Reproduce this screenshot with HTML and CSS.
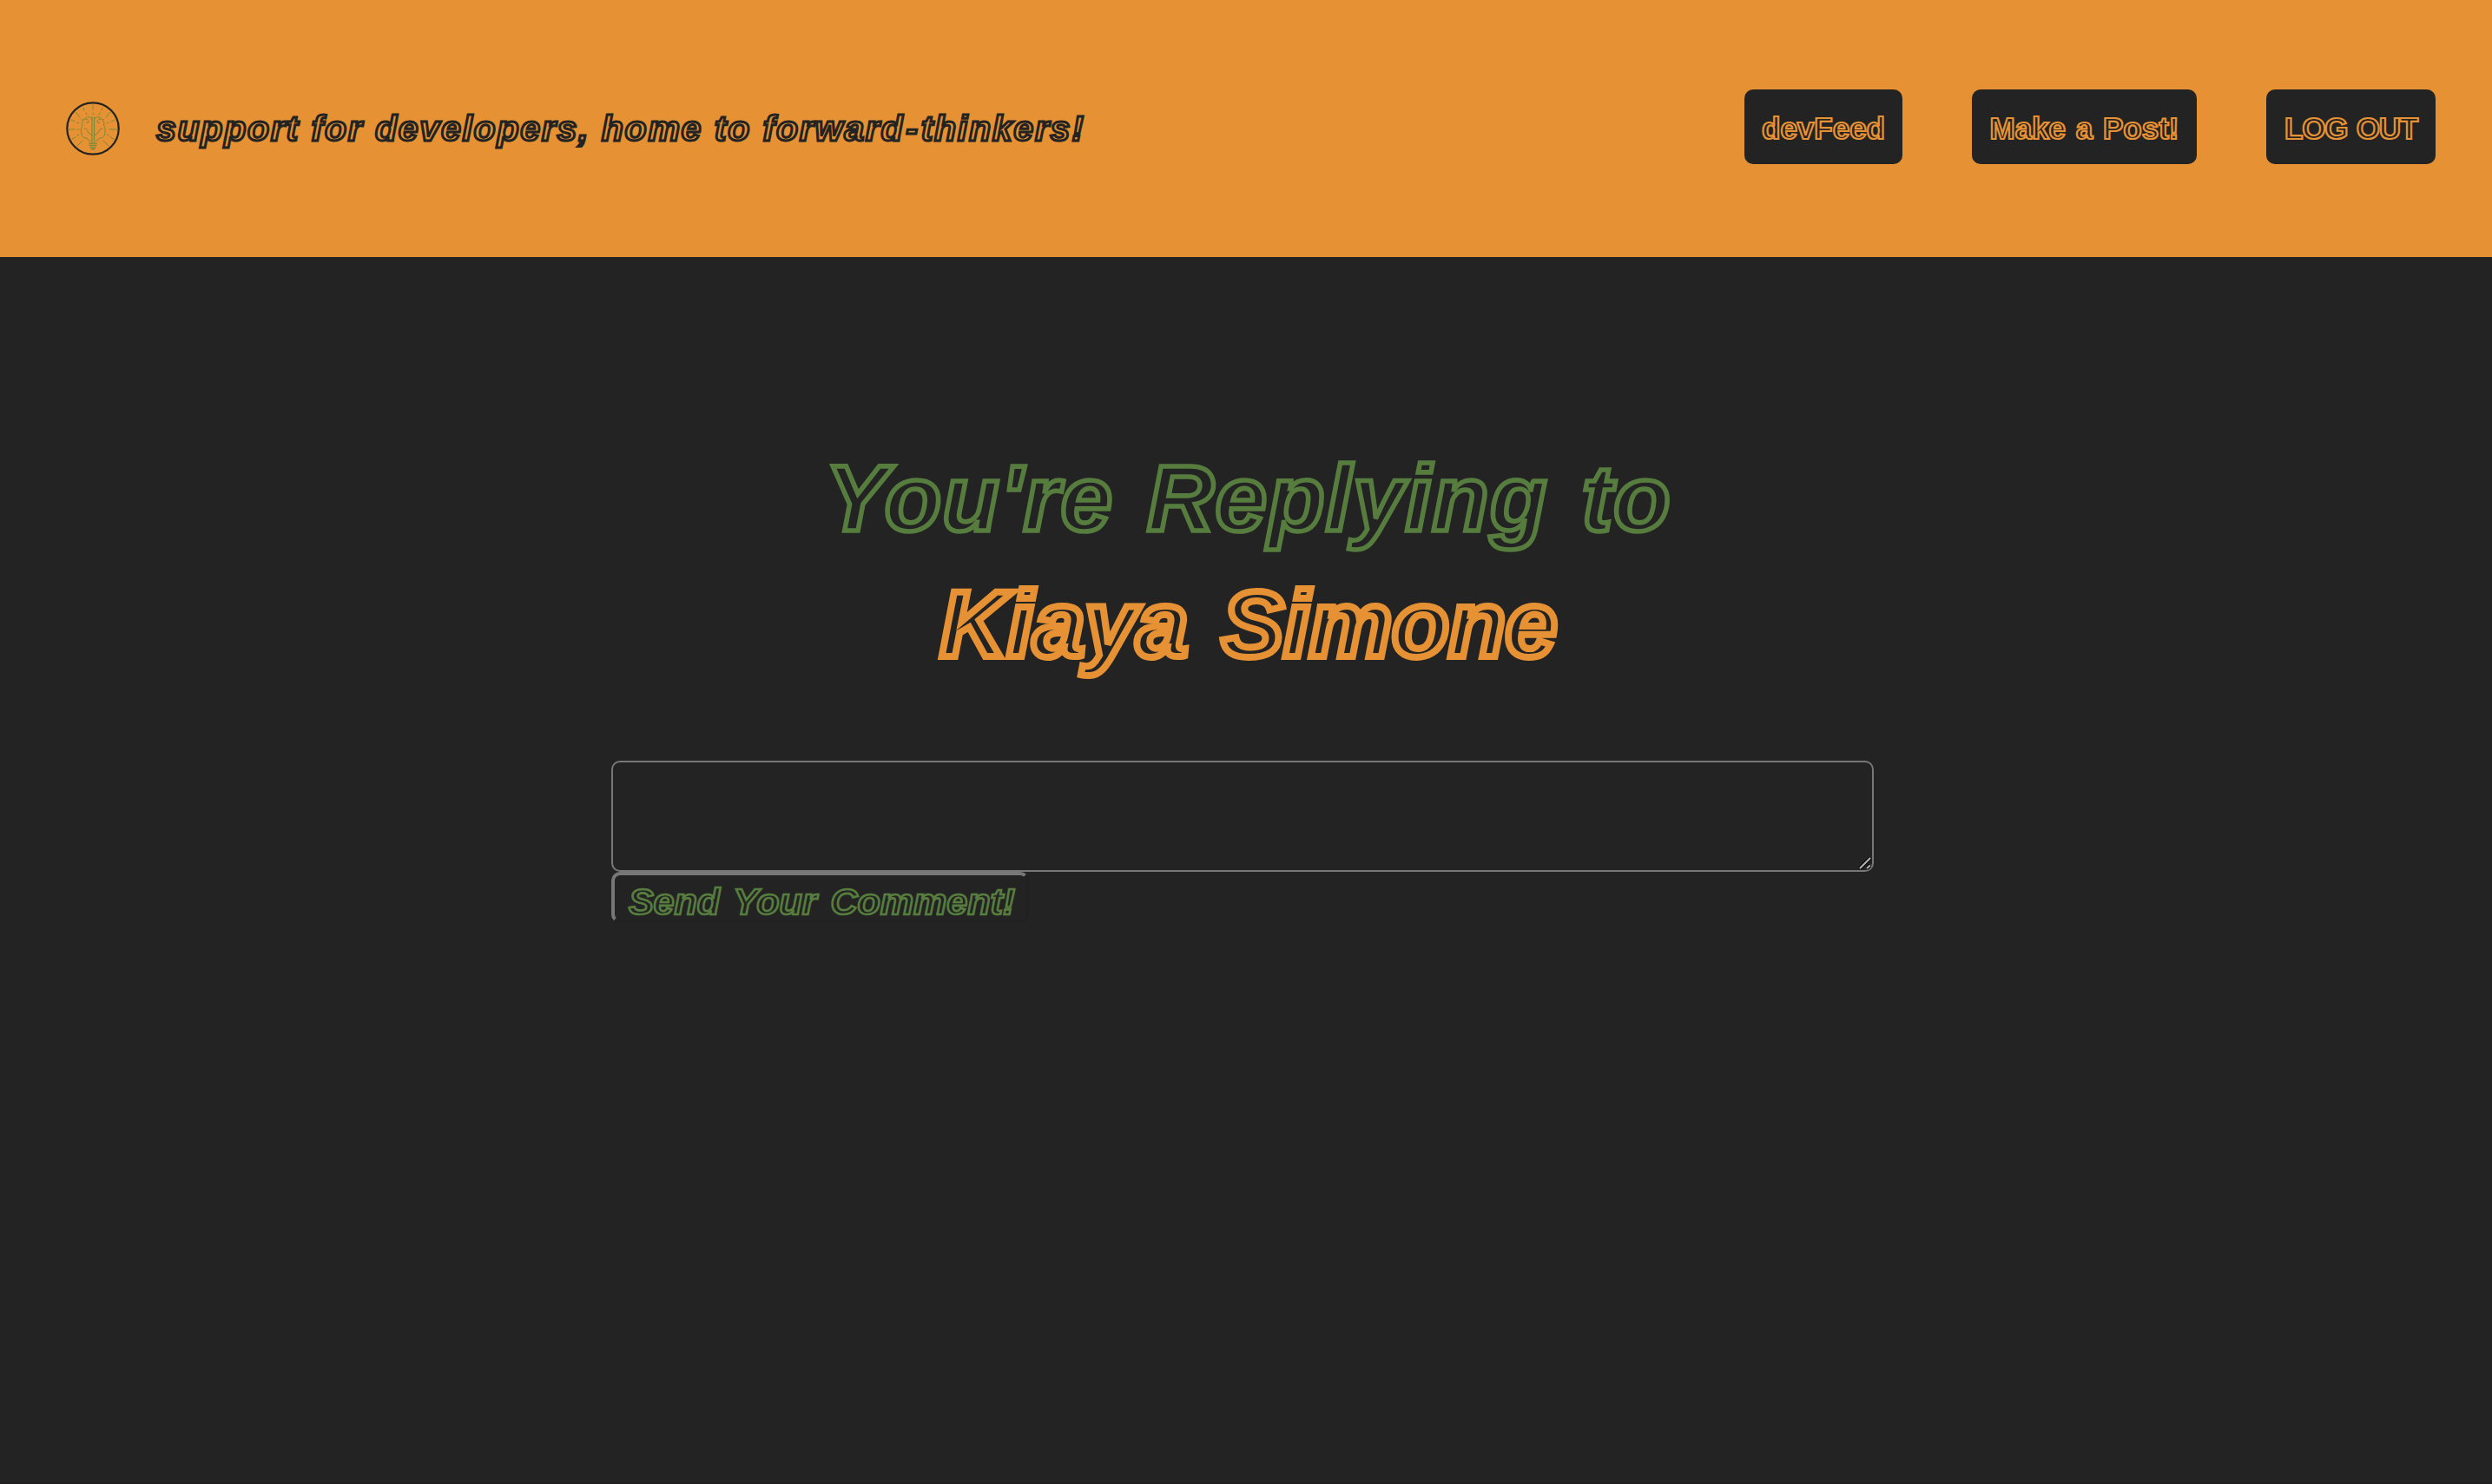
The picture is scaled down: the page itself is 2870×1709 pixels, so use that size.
FILE: index.html
```html
<!DOCTYPE html>
<html lang="en">
<head>
<meta charset="utf-8">
<title>Reply</title>
<link rel="stylesheet" href="styles.css">
</head>
<body>
<header class="header">
  <div class="brand">
    <svg class="logo" viewBox="0 0 62 62" fill="none" stroke-linecap="round">
      <circle cx="31" cy="31" r="29.7" stroke="#232323" stroke-width="2.2"/>
      <g stroke="#7b8938" stroke-width="1">
        <path d="M31 4v5M31 13v2M20 7l1 3M23 13l1 2M42 7l-1 3M39 13l-1 2M11 12l5 6M18 20l2 2M51 12l-5 6M44 20l-2 2M6 21l4 2M13 24l2 1M56 21l-4 2M49 24l-2 1M3 32h7M13 32h2M59 32h-9M7 43l4-2M13 39l2-1M55 43l-4-2M49 39l-2-1M13 51l6-6M49 51l-6-6"/>
        <path d="M30 46V18M32.500 46V18" stroke-width="1.200"/>
        <path d="M30 20c-2-3-7-3-8 0c-3 1-4 4-3 7c-2 3-2 7-1 10c0 4 3 5 6 5c1 2 2 3 4 3M32.500 20c2-3 7-3 8 0c3 1 4 4 3 7c2 3 2 7 1 10c0 4-3 5-6 5c-1 2-2 3-4 3M22 20c2 0 4 1 4 3c0 2-3 2-3 1M40 20c-2 0-4 1-4 3c0 2 3 2 3 1M21 31c3 0 4 2 4 4l5 4M42 31c-3 0-4 2-4 4l-5 4"/>
        <path d="M27 48h8M27 50.500h8M28 53h6M29.500 55h3" stroke-width="1.600"/>
      </g>
    </svg>
    <p class="tagline">support for developers, home to forward<span class="hyphen">-</span>thinkers!</p>
  </div>
  <nav class="nav">
    <a class="nav-link feed">devFeed</a>
    <a class="nav-link post">Make a Post!</a>
    <a class="nav-link logout">LOG OUT</a>
  </nav>
</header>
<main class="main">
  <h1 class="title">You're Replying to</h1>
  <h2 class="name">Kiaya Simone</h2>
  <form class="form">
    <div class="field">
      <textarea class="comment"></textarea>
      <svg class="grip" viewBox="0 0 18 18" fill="none">
        <path d="M3 16L15 4M11 16L15 12.500" stroke="#0c0c0c" stroke-width="4.500"/>
        <path d="M3 16L15 4M11 16L15 12.500" stroke="#b5b5b5" stroke-width="2"/>
      </svg>
    </div>
    <button class="send" type="button">Send Your Comment!</button>
  </form>
</main>
<footer class="footer"></footer>
</body>
</html>
```
FILE: styles.css
```css
* { box-sizing: border-box; }
body {
  margin: 0;
  height: 1709px;
  display: flex;
  flex-direction: column;
  overflow: hidden;
  background: #232323;
  font-family: "Liberation Sans", Arial, sans-serif;
  font-weight: bold;
}
.header {
  height: 296px;
  flex: none;
  display: flex;
  justify-content: space-between;
  align-items: center;
  padding: 0 65px 0 76px;
  background: #e69234;
}
.brand { display: flex; align-items: center; gap: 42px; }
.logo { width: 62px; height: 62px; }
.tagline {
  margin: 0;
  font-size: 41px;
  line-height: 60px;
  font-style: italic;
  letter-spacing: 1.75px;
  word-spacing: 0.5px;
  white-space: nowrap;
  color: transparent;
  -webkit-text-stroke: 3px #232323;
}
.hyphen { margin: 0 2px; }
.nav { display: flex; gap: 80px; margin-bottom: 4px; }
.nav-link {
  height: 86px;
  border-radius: 10px;
  background: #232323;
  font-size: 35px;
  line-height: 90px;
  text-align: center;
  white-space: nowrap;
  color: transparent;
  -webkit-text-stroke: 2.2px #e69234;
}
.feed { width: 182px; }
.post { width: 259px; word-spacing: 2px; }
.logout { width: 195px; letter-spacing: -1.2px; word-spacing: 2px; }
.main {
  flex: 1;
  display: flex;
  flex-direction: column;
  align-items: center;
  padding-top: 206px;
}
.title, .name {
  margin: 0;
  font-size: 107px;
  line-height: 145px;
  font-style: italic;
  white-space: nowrap;
  word-spacing: 9px;
  color: transparent;
}
.title {
  letter-spacing: 1.2px;
  word-spacing: 8px;
  padding-left: 5px;
  -webkit-text-stroke: 5.6px #567d3e;
}
.name {
  padding-left: 6px;
  -webkit-text-stroke: 8px #e69234;
}
.form {
  width: 1454px;
  margin: 84px 8px 0 0;
  display: flex;
  flex-direction: column;
  align-items: flex-start;
}
.field { position: relative; width: 100%; height: 128px; }
.comment {
  display: block;
  width: 100%;
  height: 128px;
  resize: none;
  border: 2px solid #777;
  border-radius: 10px;
  background: #232323;
}
.grip { position: absolute; right: 1px; bottom: 2px; width: 18px; height: 18px; }
.send {
  width: 481px;
  height: 59px;
  padding: 10px 0 0 4px;
  border: 4px solid;
  border-color: #777 #212121 #212121 #777;
  border-radius: 10px;
  background: #232323;
  font: italic bold 43px/41px "Liberation Sans", Arial, sans-serif;
  word-spacing: 4px;
  white-space: nowrap;
  color: transparent;
  -webkit-text-stroke: 2.6px #567d3e;
}
.footer { height: 2px; background: #231f20; }
```
